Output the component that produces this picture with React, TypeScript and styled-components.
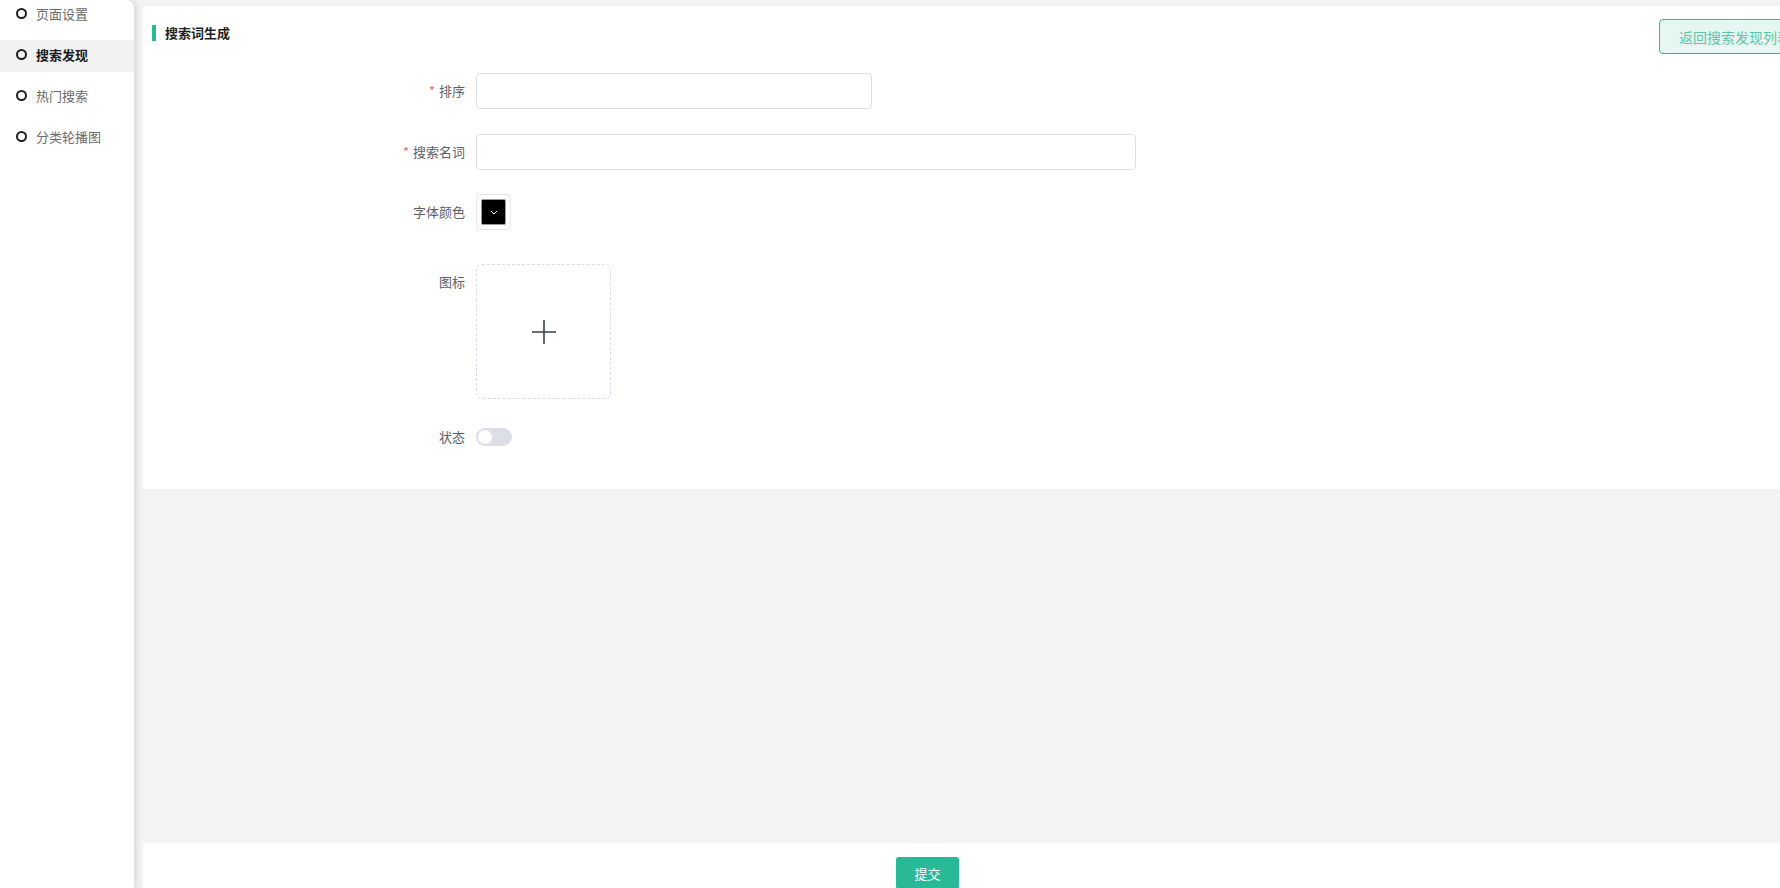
import React, { useState } from 'react'
import styled, { createGlobalStyle } from 'styled-components'

const GlobalStyle = createGlobalStyle`
  html, body {
    margin: 0;
    padding: 0;
    overflow: hidden;
    font-family: "Noto Sans CJK SC", "Noto Sans", sans-serif;
  }
  * {
    box-sizing: border-box;
  }
`

const green = '#2ab997'

const Page = styled.div`
  display: flex;
  height: 100vh;
  background-color: #f3f3f3;
  overflow: hidden;
`

const Sidebar = styled.aside`
  width: 134px;
  flex-shrink: 0;
  background-color: #fff;
  border-top-right-radius: 8px;
  box-shadow: 2px 0 6px rgba(0, 0, 0, 0.12);
  z-index: 1;
`

const MenuList = styled.ul`
  list-style: none;
  margin: -1px 0 0;
  padding: 0;
`

const MenuItem = styled.li<{ $active?: boolean }>`
  display: flex;
  align-items: center;
  height: 32px;
  margin-bottom: 9px;
  padding: 0 0 4px 16px;
  font-size: 13px;
  color: ${(p) => (p.$active ? '#1a1a1a' : '#6b6b6b')};
  font-weight: ${(p) => (p.$active ? 600 : 400)};
  background-color: ${(p) => (p.$active ? '#f2f2f2' : 'transparent')};
  cursor: pointer;
`

const Dot = styled.span`
  width: 11px;
  height: 11px;
  flex-shrink: 0;
  border: 2px solid #1f1f1f;
  border-radius: 50%;
  margin: 1px 9px 0 0;
`

const Main = styled.main`
  width: 1700px;
  flex-shrink: 0;
  display: flex;
  flex-direction: column;
  padding: 6px 0 0 9px;
`

const Card = styled.section`
  background-color: #fff;
  border-radius: 4px;
  padding: 13px 23px 34px 9px;
`

const CardHeader = styled.div`
  display: flex;
  justify-content: space-between;
  align-items: flex-start;
`

const Title = styled.h2`
  display: flex;
  align-items: center;
  margin: 6px 0 0;
  height: 16px;
  font-size: 13px;
  font-weight: 700;
  line-height: 16px;
  color: #1f1f1f;
  &::before {
    content: '';
    width: 4px;
    height: 16px;
    background-color: ${green};
    margin-right: 9px;
  }
`

const BackButton = styled.button`
  height: 35px;
  padding: 0 19px;
  font-family: inherit;
  font-size: 14px;
  color: #5fc5a8;
  background-color: #e6f6f1;
  border: 1px solid ${green};
  border-radius: 4px;
  cursor: pointer;
`

const Form = styled.form`
  margin-top: 19px;
`

const FormItem = styled.div<{ $mb?: number }>`
  display: flex;
  align-items: flex-start;
  margin-bottom: ${(p) => p.$mb ?? 0}px;
`

const Label = styled.label`
  width: 324px;
  flex-shrink: 0;
  padding-right: 11px;
  text-align: right;
  font-size: 13px;
  line-height: 35px;
  color: #5e6068;
`

const Star = styled.span`
  color: #f56c6c;
  margin-right: 4px;
`

const Input = styled.input<{ $width: number }>`
  width: ${(p) => p.$width}px;
  height: 36px;
  padding: 0 12px;
  font-family: inherit;
  font-size: 13px;
  border: 1px solid #dcdfe6;
  border-radius: 4px;
  outline: none;
  &:focus {
    border-color: ${green};
  }
`

const ColorBox = styled.div`
  width: 35px;
  height: 36px;
  padding: 4px;
  border: 1px solid #e4e6eb;
  border-radius: 4px;
  display: flex;
`

const ColorSwatch = styled.div<{ $color: string }>`
  flex: 1;
  display: flex;
  align-items: center;
  justify-content: center;
  background-color: ${(p) => p.$color};
  border: 1px solid #9a9a9a;
  border-radius: 2px;
`

const Upload = styled.div`
  width: 135px;
  height: 135px;
  display: flex;
  align-items: center;
  justify-content: center;
  border: 1px dashed #d9dce6;
  border-radius: 6px;
  cursor: pointer;
`

const SwitchRow = styled.div`
  height: 36px;
  display: flex;
  align-items: center;
`

const Switch = styled.button<{ $on: boolean }>`
  position: relative;
  width: 36px;
  height: 18px;
  padding: 0;
  border: none;
  border-radius: 9px;
  background-color: ${(p) => (p.$on ? green : '#dcdfe6')};
  cursor: pointer;
  &::after {
    content: '';
    position: absolute;
    top: 2px;
    left: ${(p) => (p.$on ? '20px' : '2px')};
    width: 14px;
    height: 14px;
    border-radius: 50%;
    background-color: #fff;
    transition: left 0.2s;
  }
`

const Footer = styled.footer`
  margin-top: auto;
  height: 45px;
  padding: 14px 0 0 753px;
  background-color: #fff;
  border-radius: 4px 4px 0 0;
  overflow: hidden;
`

const SubmitButton = styled.button`
  width: 63px;
  height: 32px;
  font-family: inherit;
  font-size: 13px;
  color: #fff;
  background-color: ${green};
  border: none;
  border-radius: 3px;
  cursor: pointer;
`

const menu = ['页面设置', '搜索发现', '热门搜索', '分类轮播图']

const App: React.FC = () => {
  const [active, setActive] = useState(1)
  const [status, setStatus] = useState(false)

  return (
    <Page>
      <GlobalStyle />
      <Sidebar>
        <MenuList>
          {menu.map((item, i) => (
            <MenuItem key={item} $active={i === active} onClick={() => setActive(i)}>
              <Dot />
              {item}
            </MenuItem>
          ))}
        </MenuList>
      </Sidebar>
      <Main>
        <Card>
          <CardHeader>
            <Title>搜索词生成</Title>
            <BackButton type="button">返回搜索发现列表</BackButton>
          </CardHeader>
          <Form onSubmit={(e) => e.preventDefault()}>
            <FormItem $mb={25}>
              <Label>
                <Star>*</Star>排序
              </Label>
              <Input $width={396} />
            </FormItem>
            <FormItem $mb={24}>
              <Label>
                <Star>*</Star>搜索名词
              </Label>
              <Input $width={660} />
            </FormItem>
            <FormItem $mb={34}>
              <Label>字体颜色</Label>
              <ColorBox>
                <ColorSwatch $color="#000">
                  <svg width="8" height="5" viewBox="0 0 8 5">
                    <path d="M1 1l3 3 3-3" fill="none" stroke="#fff" strokeWidth="1" />
                  </svg>
                </ColorSwatch>
              </ColorBox>
            </FormItem>
            <FormItem $mb={20}>
              <Label>图标</Label>
              <Upload>
                <svg width="24" height="24" viewBox="0 0 24 24">
                  <path d="M12 0v24M0 12h24" stroke="#3a3f4b" strokeWidth="1.6" />
                </svg>
              </Upload>
            </FormItem>
            <FormItem>
              <Label>状态</Label>
              <SwitchRow>
                <Switch type="button" $on={status} onClick={() => setStatus(!status)} />
              </SwitchRow>
            </FormItem>
          </Form>
        </Card>
        <Footer>
          <SubmitButton type="button">提交</SubmitButton>
        </Footer>
      </Main>
    </Page>
  )
}

export default App
